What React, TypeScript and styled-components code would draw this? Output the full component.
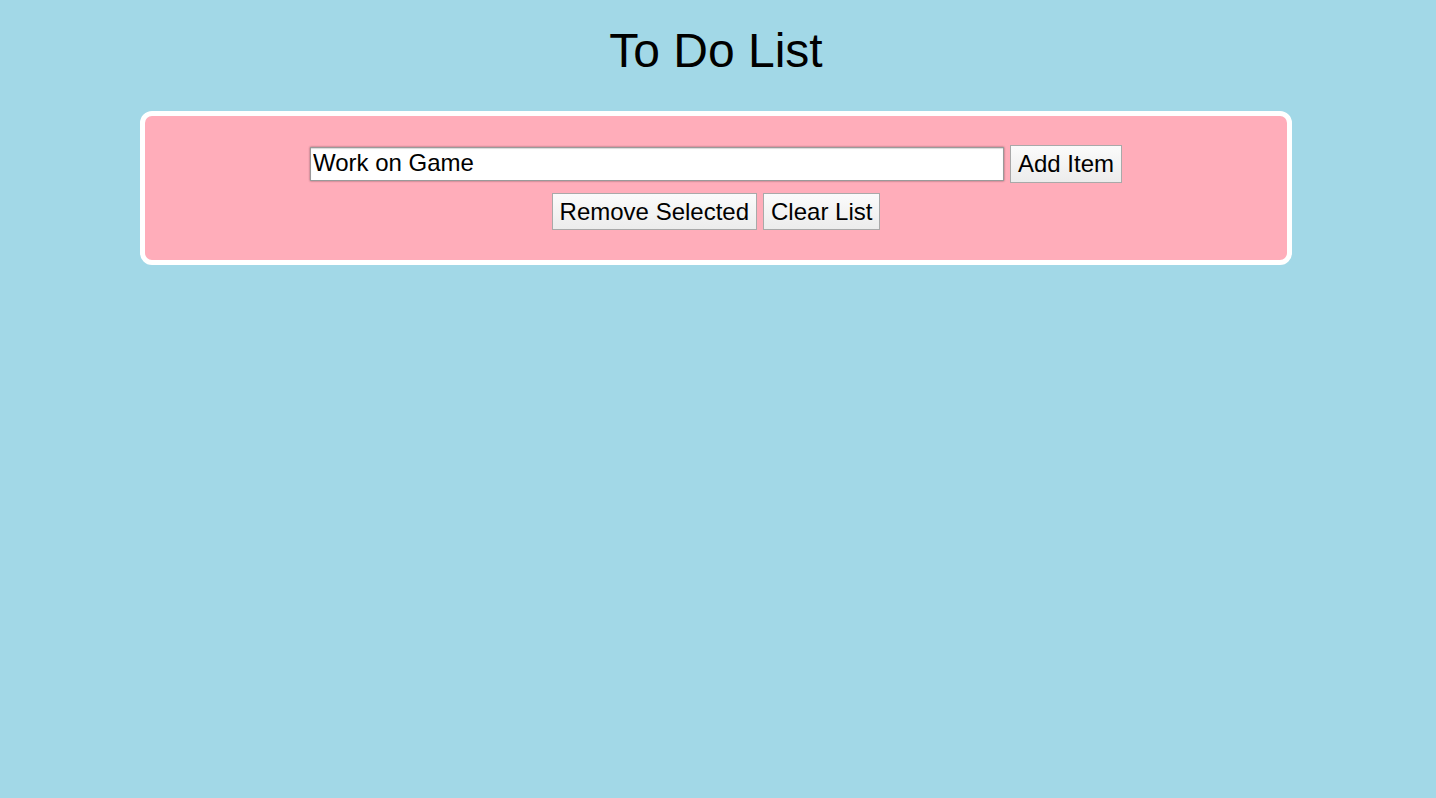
import React, { useEffect, useRef, useState } from "react";
import styled, { createGlobalStyle } from "styled-components";

const GlobalStyle = createGlobalStyle`
  html, body {
    margin: 0;
    padding: 0;
    background: #a2d8e7;
    font-family: "Liberation Sans", Arial, sans-serif;
  }
  body {
    padding: 27px 4px 0 0;
    min-height: 798px;
    box-sizing: border-box;
  }
`;

const Page = styled.main`
  display: flex;
  flex-direction: column;
  align-items: center;
`;

const Title = styled.h1`
  margin: 0;
  font-size: 48px;
  line-height: 48px;
  font-weight: 400;
  color: #000;
`;

const Card = styled.section`
  box-sizing: border-box;
  width: 1152px;
  margin-top: 36px;
  padding: 29px 0 30px;
  background: #ffadba;
  border: 5px solid #ffffff;
  border-radius: 12px;
  display: flex;
  flex-direction: column;
  align-items: center;
  gap: 10px;
`;

const Row = styled.div`
  display: flex;
  align-items: center;
  justify-content: center;
  gap: 6px;
`;

const TextInput = styled.input`
  box-sizing: border-box;
  width: 694px;
  height: 34px;
  padding: 0 2px 2px;
  font-family: "Liberation Sans", Arial, sans-serif;
  font-size: 24px;
  color: #000;
  caret-color: #000;
  background: #fff;
  border: 1px solid #9a9a9a;
  box-shadow: 0 0 2px rgba(0, 0, 0, 0.45), inset 0 1px 1px rgba(0, 0, 0, 0.15);
  outline: none;
`;

const Button = styled.button<{ $h?: number }>`
  box-sizing: border-box;
  height: ${(p) => p.$h ?? 38}px;
  padding: 0 7px;
  font-family: "Liberation Sans", Arial, sans-serif;
  font-size: 24px;
  color: #000;
  background: linear-gradient(#fbfbfb, #ececec);
  border: 1px solid #a9a9a9;
  border-radius: 0;
  cursor: pointer;
`;

export default function App() {
  const [text, setText] = useState("Work on Game");
  const inputRef = useRef<HTMLInputElement>(null);

  useEffect(() => {
    const el = inputRef.current;
    if (el) {
      el.focus();
      el.setSelectionRange(el.value.length, el.value.length);
    }
  }, []);

  return (
    <>
      <GlobalStyle />
      <Page>
        <Title>To Do List</Title>
        <Card>
          <Row>
            <TextInput
              ref={inputRef}
              value={text}
              onChange={(e) => setText(e.target.value)}
            />
            <Button>Add Item</Button>
          </Row>
          <Row>
            <Button $h={37}>Remove Selected</Button>
            <Button $h={37}>Clear List</Button>
          </Row>
        </Card>
      </Page>
    </>
  );
}
